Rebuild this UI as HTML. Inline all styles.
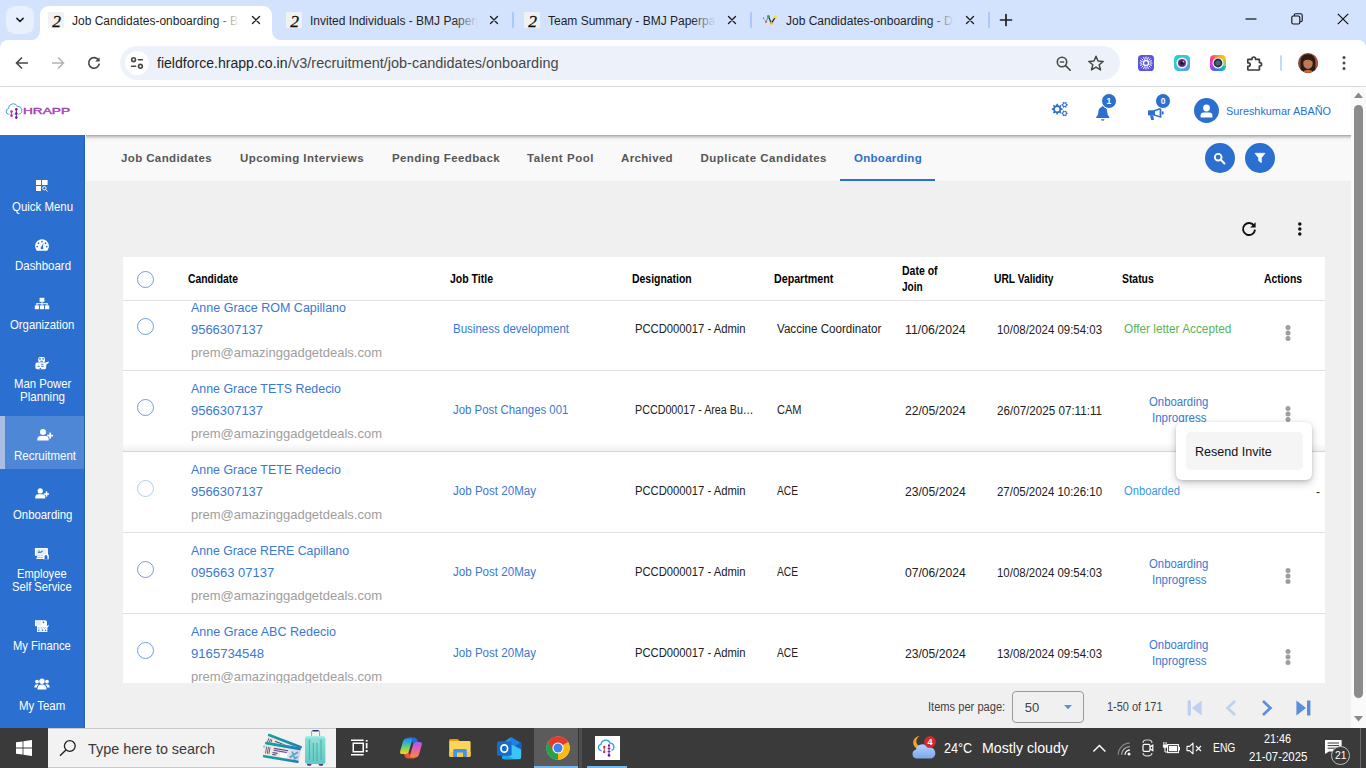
<!DOCTYPE html>
<html lang="en">
<head>
<meta charset="utf-8">
<title>Job Candidates-onboarding - BMJ Paperpack</title>
<style>
*{box-sizing:border-box;margin:0;padding:0}
html,body{width:1366px;height:768px;overflow:hidden;background:#fff;font-family:"Liberation Sans",sans-serif;color:#000}
#root{position:relative;width:1366px;height:768px;overflow:hidden}
.a{position:absolute;display:block}
.t{position:absolute;display:block;white-space:pre}
</style>
</head>
<body>
<div id="root">
<!-- chrome tab strip -->
<div class="a" style="left:0px;top:0px;width:1366px;height:50px;background:#d3e3fd;"></div>
<div class="a" style="left:0px;top:40px;width:1366px;height:46px;background:#fff;border-radius:8px 8px 0 0;"></div>
<div class="a" style="left:0px;top:86px;width:1366px;height:1px;background:#dcdfe3;"></div>
<div class="a" style="left:6px;top:6px;width:28px;height:28px;background:#e8f0fe;border-radius:9px;"></div>
<svg class="a" style="left:14px;top:15px;" width="12" height="10" viewBox="0 0 12 10"><path d="M2.9 3.4 L6 6.5 L9.1 3.4" fill="none" stroke="#1f1f1f" stroke-width="1.6" stroke-linecap="round" stroke-linejoin="round"/></svg>
<svg class="a" style="left:28px;top:6px;" width="256" height="35" viewBox="0 0 256 35"><path d="M0 35 C7 35 12 31 12 24 V9 C12 4 16 0 21 0 H235 C240 0 244 4 244 9 V24 C244 31 249 35 256 35 Z" fill="#fff"/></svg>
<div class="a" style="left:48px;top:12px;width:16px;height:16px;background:#f1f1f1;"></div>
<span class="t" style="left:52.23px;top:8.60px;font-size:17.5px;line-height:24px;color:#0a0a0a;font-style:italic;font-family:'Liberation Serif',serif;-webkit-text-stroke:0.3px #0a0a0a;">2</span>
<div class="a" style="left:72px;top:10px;width:168px;height:20px;overflow:hidden">
<span class="t" style="left:0;top:2px;font-size:12px;line-height:18px;color:#1f1f1f;letter-spacing:0px">Job Candidates-onboarding - BMJ Paperpack</span>
<div class="a" style="right:0;top:0;width:24px;height:20px;background:linear-gradient(to right,rgba(255,255,255,0),rgba(255,255,255,1))"></div>
</div>
<svg class="a" style="left:251px;top:15px;" width="10" height="10" viewBox="0 0 10 10"><path d="M1.5 1.5 L8.5 8.5 M8.5 1.5 L1.5 8.5" fill="none" stroke="#1f1f1f" stroke-width="1.35" stroke-linecap="round"/></svg>
<div class="a" style="left:286px;top:12px;width:16px;height:16px;background:#f1f1f1;"></div>
<span class="t" style="left:290.23px;top:8.60px;font-size:17.5px;line-height:24px;color:#0a0a0a;font-style:italic;font-family:'Liberation Serif',serif;-webkit-text-stroke:0.3px #0a0a0a;">2</span>
<div class="a" style="left:310px;top:10px;width:168px;height:20px;overflow:hidden">
<span class="t" style="left:0;top:2px;font-size:12px;line-height:18px;color:#1f1f1f;letter-spacing:0px">Invited Individuals - BMJ Paperpack</span>
<div class="a" style="right:0;top:0;width:24px;height:20px;background:linear-gradient(to right,rgba(211,227,253,0),rgba(211,227,253,1))"></div>
</div>
<svg class="a" style="left:489px;top:15px;" width="10" height="10" viewBox="0 0 10 10"><path d="M1.5 1.5 L8.5 8.5 M8.5 1.5 L1.5 8.5" fill="none" stroke="#1f1f1f" stroke-width="1.35" stroke-linecap="round"/></svg>
<div class="a" style="left:512px;top:12px;width:2px;height:16px;background:#a8c7fa;border-radius:1px;"></div>
<div class="a" style="left:524px;top:12px;width:16px;height:16px;background:#f1f1f1;"></div>
<span class="t" style="left:528.23px;top:8.60px;font-size:17.5px;line-height:24px;color:#0a0a0a;font-style:italic;font-family:'Liberation Serif',serif;-webkit-text-stroke:0.3px #0a0a0a;">2</span>
<div class="a" style="left:548px;top:10px;width:168px;height:20px;overflow:hidden">
<span class="t" style="left:0;top:2px;font-size:12px;line-height:18px;color:#1f1f1f;letter-spacing:0px">Team Summary - BMJ Paperpack</span>
<div class="a" style="right:0;top:0;width:24px;height:20px;background:linear-gradient(to right,rgba(211,227,253,0),rgba(211,227,253,1))"></div>
</div>
<svg class="a" style="left:727px;top:15px;" width="10" height="10" viewBox="0 0 10 10"><path d="M1.5 1.5 L8.5 8.5 M8.5 1.5 L1.5 8.5" fill="none" stroke="#1f1f1f" stroke-width="1.35" stroke-linecap="round"/></svg>
<div class="a" style="left:750px;top:12px;width:2px;height:16px;background:#a8c7fa;border-radius:1px;"></div>
<svg class="a" style="left:761px;top:11px;" width="18" height="18" viewBox="0 0 18 18"><path d="M2.5 7 L5 11" stroke="#8a94a6" stroke-width="0.6"/><path d="M5 11 L7.4 5.3" stroke="#7a7f88" stroke-width="0.9"/><path d="M7.4 5.3 L10.3 12.3" stroke="#333" stroke-width="1.2"/><path d="M10.3 12.3 L14.5 6" stroke="#222" stroke-width="1.3"/><circle cx="2.5" cy="7" r="0.7" fill="#3b82e6"/><circle cx="5" cy="11" r="1" fill="#ea4a3f"/><circle cx="7.4" cy="5.3" r="1.4" fill="#34a853"/><circle cx="10.3" cy="12.3" r="1.4" fill="#fbb514"/><circle cx="14.5" cy="6" r="1.6" fill="#fde11a"/></svg>
<div class="a" style="left:786px;top:10px;width:168px;height:20px;overflow:hidden">
<span class="t" style="left:0;top:2px;font-size:12px;line-height:18px;color:#1f1f1f;letter-spacing:0px">Job Candidates-onboarding - Dev</span>
<div class="a" style="right:0;top:0;width:24px;height:20px;background:linear-gradient(to right,rgba(211,227,253,0),rgba(211,227,253,1))"></div>
</div>
<svg class="a" style="left:965px;top:15px;" width="10" height="10" viewBox="0 0 10 10"><path d="M1.5 1.5 L8.5 8.5 M8.5 1.5 L1.5 8.5" fill="none" stroke="#1f1f1f" stroke-width="1.35" stroke-linecap="round"/></svg>
<div class="a" style="left:988px;top:12px;width:2px;height:16px;background:#a8c7fa;border-radius:1px;"></div>
<svg class="a" style="left:999px;top:13px;" width="14" height="14" viewBox="0 0 14 14"><path d="M7 1.5 V12.5 M1.5 7 H12.5" stroke="#1f1f1f" stroke-width="1.7" stroke-linecap="round"/></svg>
<svg class="a" style="left:1245px;top:14px;" width="12" height="10" viewBox="0 0 12 10"><path d="M0.5 5 H11.5" stroke="#111" stroke-width="1.2"/></svg>
<svg class="a" style="left:1291px;top:13px;" width="12" height="12" viewBox="0 0 12 12"><rect x="0.8" y="3" width="8" height="8" rx="1.5" fill="none" stroke="#111" stroke-width="1.1"/><path d="M3.2 3 V2.3 Q3.2 0.8 4.7 0.8 H9.7 Q11.2 0.8 11.2 2.3 V7.3 Q11.2 8.8 9.7 8.8 H9" fill="none" stroke="#111" stroke-width="1.1"/></svg>
<svg class="a" style="left:1337px;top:13px;" width="12" height="12" viewBox="0 0 12 12"><path d="M0.8 0.8 L11.2 11.2 M11.2 0.8 L0.8 11.2" stroke="#111" stroke-width="1.2"/></svg>
<!-- chrome toolbar -->
<svg class="a" style="left:14px;top:55px;" width="16" height="16" viewBox="0 0 16 16"><path d="M14 8 H3 M8 2.5 L2.5 8 L8 13.5" fill="none" stroke="#474747" stroke-width="1.6" stroke-linejoin="miter"/></svg>
<svg class="a" style="left:50px;top:55px;" width="16" height="16" viewBox="0 0 16 16"><path d="M2 8 H13 M8 2.5 L13.5 8 L8 13.5" fill="none" stroke="#b4b4b4" stroke-width="1.6"/></svg>
<svg class="a" style="left:86px;top:55px;" width="16" height="16" viewBox="0 0 16 16"><path d="M12.6 5.2 A5.3 5.3 0 1 0 13.3 8.6" fill="none" stroke="#474747" stroke-width="1.6"/><path d="M13.6 2.2 V6.6 H9.2 Z" fill="#474747"/></svg>
<div class="a" style="left:120px;top:46px;width:1000px;height:34px;background:#edf2fa;border-radius:17px;"></div>
<div class="a" style="left:125px;top:51px;width:24px;height:24px;background:#fff;border-radius:12px;"></div>
<svg class="a" style="left:129px;top:55px;" width="16" height="16" viewBox="0 0 16 16"><g fill="none" stroke="#474747" stroke-width="1.6" stroke-linecap="round"><circle cx="4.6" cy="4.7" r="1.9"/><path d="M9.4 4.7 H13.4"/><circle cx="11.4" cy="11.3" r="1.9"/><path d="M2.6 11.3 H6.6"/></g></svg>
<span class="t" style="left:157.00px;top:53.00px;font-size:14px;line-height:20px;color:#1f1f1f;transform:scaleX(1.0041);transform-origin:0 50%;">fieldforce.hrapp.co.in</span>
<span class="t" style="left:287.50px;top:53.00px;font-size:14px;line-height:20px;color:#474747;transform:scaleX(1.0344);transform-origin:0 50%;">/v3/recruitment/job-candidates/onboarding</span>
<svg class="a" style="left:1055px;top:55px;" width="18" height="18" viewBox="0 0 18 18"><g fill="none" stroke="#474747" stroke-width="1.6"><circle cx="7" cy="7" r="4.7"/><path d="M10.6 10.6 L15.2 15.2" stroke-linecap="round"/><path d="M4.8 7 H9.2" stroke-width="1.4"/></g></svg>
<svg class="a" style="left:1087px;top:54px;" width="18" height="18" viewBox="0 0 18 18"><path d="M9 2.2 L11 7 L16.2 7.4 L12.2 10.8 L13.5 15.9 L9 13.1 L4.5 15.9 L5.8 10.8 L1.8 7.4 L7 7 Z" fill="none" stroke="#474747" stroke-width="1.5" stroke-linejoin="round"/></svg>
<svg class="a" style="left:1138px;top:55px;" width="16" height="16" viewBox="0 0 16 16"><rect width="16" height="16" rx="3.6" fill="#5a55e6"/><circle cx="8" cy="8" r="2.5" fill="none" stroke="#fff" stroke-width="1.3"/><g stroke="#fff" stroke-width="1" stroke-linecap="round"><path d="M8 2V3.9M8 12.1V14M2 8H3.9M12.1 8H14M3.75 3.75L5.1 5.1M10.9 10.9L12.25 12.25M12.25 3.75L10.9 5.1M5.1 10.9L3.75 12.25M5.7 2.45L6.4 4.2M9.6 11.8L10.3 13.55M10.3 2.45L9.6 4.2M6.4 11.8L5.7 13.55M2.45 5.7L4.2 6.4M11.8 9.6L13.55 10.3M2.45 10.3L4.2 9.6M11.8 6.4L13.55 5.7"/></g></svg>
<svg class="a" style="left:1174px;top:55px;" width="16" height="16" viewBox="0 0 16 16"><defs><linearGradient id="g2" x1="0" y1="0" x2="1" y2="1"><stop offset="0" stop-color="#1fd6c1"/><stop offset="0.55" stop-color="#3fc0dd"/><stop offset="1" stop-color="#6d86f2"/></linearGradient></defs><rect width="16" height="16" rx="4.2" fill="url(#g2)"/><circle cx="8" cy="8" r="5.6" fill="#f6f3fb"/><circle cx="8" cy="8" r="4" fill="#6b3d8e"/><circle cx="8" cy="8" r="2.7" fill="#3b2052"/><circle cx="8" cy="8" r="1.2" fill="#1b0f28"/><circle cx="9.4" cy="6.6" r="0.9" fill="#c9b3e8"/></svg>
<svg class="a" style="left:1210px;top:55px;" width="16" height="16" viewBox="0 0 16 16"><defs><linearGradient id="g3a" x1="0" y1="0" x2="1" y2="0"><stop offset="0" stop-color="#ff2a8e"/><stop offset="0.5" stop-color="#ff9a1f"/><stop offset="1" stop-color="#f4d21f"/></linearGradient><linearGradient id="g3b" x1="0" y1="0" x2="1" y2="0"><stop offset="0" stop-color="#a23cf0"/><stop offset="0.5" stop-color="#2f7df0"/><stop offset="1" stop-color="#1fcf9a"/></linearGradient><clipPath id="g3c"><rect width="16" height="16" rx="4.2"/></clipPath></defs><g clip-path="url(#g3c)"><rect width="16" height="8" fill="url(#g3a)"/><rect y="8" width="16" height="8" fill="url(#g3b)"/><rect y="5" width="3" height="6" fill="#e338c8"/><rect x="13" y="5" width="3" height="6" fill="#8fd93a"/></g><circle cx="8" cy="8" r="5.5" fill="#fff"/><circle cx="8" cy="8" r="4.4" fill="#2a3340"/><circle cx="8" cy="8" r="2.6" fill="#48627c"/></svg>
<svg class="a" style="left:1245px;top:54px;" width="18" height="18" viewBox="0 0 18 18"><path d="M3.2 5.4 H7 V4.8 A1.8 1.8 0 0 1 10.6 4.8 V5.4 H14 Q14.4 5.4 14.4 5.8 V8.6 H14.8 A1.8 1.8 0 0 1 14.8 12.2 H14.4 V15.6 Q14.4 16 14 16 H3.2 Q2.8 16 2.8 15.6 V12.4 H3.4 A1.8 1.8 0 0 0 3.4 8.8 H2.8 V5.8 Q2.8 5.4 3.2 5.4 Z" fill="none" stroke="#3c3c3c" stroke-width="1.7" stroke-linejoin="round"/></svg>
<div class="a" style="left:1280px;top:55px;width:2px;height:16px;background:#c7d9f7;border-radius:1px;"></div>
<svg class="a" style="left:1298px;top:53px;" width="20" height="20" viewBox="0 0 20 20"><defs><clipPath id="av"><circle cx="10" cy="10" r="10"/></clipPath></defs><g clip-path="url(#av)"><rect width="20" height="20" fill="#8a4a2c"/><rect x="15" width="5" height="20" fill="#b5523c"/><path d="M2.6 20 V9 Q2.6 1.2 10 1.2 Q17.4 1.2 17.4 9 V20 Z" fill="#2b1a15"/><ellipse cx="10" cy="10.4" rx="4.7" ry="5.6" fill="#b97a58"/><path d="M5.6 8.2 Q7 4.4 10 4.8 Q13.4 4.6 14.4 8.4 Q12 6.4 10 6.8 Q7.6 6.6 5.6 8.2 Z" fill="#2b1a15"/><path d="M3 20 Q10 13.6 17 20 Z" fill="#d7632e"/></g></svg>
<svg class="a" style="left:1341px;top:55px;" width="6" height="16" viewBox="0 0 6 16"><circle cx="3" cy="2.6" r="1.5" fill="#474747"/><circle cx="3" cy="8" r="1.5" fill="#474747"/><circle cx="3" cy="13.4" r="1.5" fill="#474747"/></svg>
<!-- page background / tabs bar -->
<div class="a" style="left:85px;top:135px;width:1266px;height:593px;background:#f0f0f0;"></div>
<div class="a" style="left:85px;top:135px;width:1266px;height:46px;background:#f9f9f9;"></div>
<div class="a" style="left:85px;top:181px;width:1266px;height:1px;background:#ededed;"></div>
<div class="a" style="left:1351px;top:87px;width:15px;height:641px;background:#fafafa;z-index:9;"></div>
<svg class="a" style="left:1351px;top:87px;z-index:10;" width="15" height="17" viewBox="0 0 15 17"><path d="M7.5 5.5 L12 11 H3 Z" fill="#8a8a8a"/></svg>
<svg class="a" style="left:1351px;top:710px;z-index:10;" width="15" height="17" viewBox="0 0 15 17"><path d="M7.5 11.5 L12 6 H3 Z" fill="#8a8a8a"/></svg>
<div class="a" style="left:1354px;top:105px;width:9px;height:592.5px;background:#8b8b8b;border-radius:4.5px;z-index:10;"></div>
<!-- router tabs -->
<span class="t" style="left:121.00px;top:149.70px;font-size:11.5px;line-height:16px;color:#565656;font-weight:700;letter-spacing:0.383px;">Job Candidates</span>
<span class="t" style="left:240.00px;top:149.70px;font-size:11.5px;line-height:16px;color:#565656;font-weight:700;letter-spacing:0.438px;">Upcoming Interviews</span>
<span class="t" style="left:392.00px;top:149.70px;font-size:11.5px;line-height:16px;color:#565656;font-weight:700;letter-spacing:0.399px;">Pending Feedback</span>
<span class="t" style="left:527.00px;top:149.70px;font-size:11.5px;line-height:16px;color:#565656;font-weight:700;letter-spacing:0.534px;">Talent Pool</span>
<span class="t" style="left:621.00px;top:149.70px;font-size:11.5px;line-height:16px;color:#565656;font-weight:700;letter-spacing:0.348px;">Archived</span>
<span class="t" style="left:700.50px;top:149.70px;font-size:11.5px;line-height:16px;color:#565656;font-weight:700;letter-spacing:0.477px;">Duplicate Candidates</span>
<span class="t" style="left:854.00px;top:149.70px;font-size:11.5px;line-height:16px;color:#2b6fd0;font-weight:700;letter-spacing:0.283px;">Onboarding</span>
<div class="a" style="left:840px;top:179px;width:95px;height:2px;background:#2b6fd0;"></div>
<div class="a" style="left:1205px;top:143px;width:30px;height:30px;background:#2b6fd0;border-radius:15px;"></div>
<svg class="a" style="left:1213.4px;top:152.2px;" width="13" height="13" viewBox="0 0 14 14"><circle cx="5.6" cy="5.6" r="3.6" fill="none" stroke="#fff" stroke-width="2"/><path d="M8.4 8.4 L12.3 12.3" stroke="#fff" stroke-width="2.2" stroke-linecap="round"/></svg>
<div class="a" style="left:1244.5px;top:143px;width:30px;height:30px;background:#2b6fd0;border-radius:15px;"></div>
<svg class="a" style="left:1253.5px;top:152.4px;" width="12" height="12" viewBox="0 0 14 14"><path d="M1.2 1.5 H12.8 L8.6 6.8 V12.4 L5.4 10.2 V6.8 Z" fill="#fff" stroke="#fff" stroke-width="0.8" stroke-linejoin="round"/></svg>
<svg class="a" style="left:1240px;top:220px;" width="18" height="18" viewBox="0 0 18 18"><path d="M14.2 6 A6 6 0 1 0 15 9.6" fill="none" stroke="#111" stroke-width="1.9"/><path d="M15.6 2.2 V7.6 H10.2 Z" fill="#111"/></svg>
<svg class="a" style="left:1296px;top:221px;" width="8" height="16" viewBox="0 0 8 16"><circle cx="3.8" cy="3" r="1.75" fill="#111"/><circle cx="3.8" cy="8" r="1.75" fill="#111"/><circle cx="3.8" cy="13" r="1.75" fill="#111"/></svg>
<!-- sidebar -->
<div class="a" style="left:0;top:0;width:86px;height:728px;z-index:6">
<div class="a" style="left:0px;top:135px;width:84px;height:593px;background:#2b6fd0;"></div>
<div class="a" style="left:84px;top:135px;width:1px;height:593px;background:#1f5eb9;"></div>
<div class="a" style="left:85px;top:135px;width:1px;height:593px;background:#fcfaf6;"></div>
<div class="a" style="left:0px;top:416px;width:84px;height:53px;background:#4d87d6;"></div>
<div class="a" style="left:0px;top:416px;width:5px;height:53px;background:#a9bfe1;"></div>
<span class="t" style="left:11.50px;top:197.00px;font-size:13px;line-height:19px;color:#fff;transform:scaleX(0.8793);transform-origin:0 50%;">Quick Menu</span>
<span class="t" style="left:14.50px;top:256.00px;font-size:13px;line-height:19px;color:#fff;transform:scaleX(0.8804);transform-origin:0 50%;">Dashboard</span>
<span class="t" style="left:9.80px;top:315.00px;font-size:13px;line-height:19px;color:#fff;transform:scaleX(0.8736);transform-origin:0 50%;">Organization</span>
<span class="t" style="left:13.60px;top:374.00px;font-size:13px;line-height:19px;color:#fff;transform:scaleX(0.8730);transform-origin:0 50%;">Man Power</span>
<span class="t" style="left:19.80px;top:387.00px;font-size:13px;line-height:19px;color:#fff;transform:scaleX(0.8892);transform-origin:0 50%;">Planning</span>
<span class="t" style="left:13.50px;top:446.00px;font-size:13px;line-height:19px;color:#fff;transform:scaleX(0.8847);transform-origin:0 50%;">Recruitment</span>
<span class="t" style="left:12.90px;top:505.00px;font-size:13px;line-height:19px;color:#fff;transform:scaleX(0.8741);transform-origin:0 50%;">Onboarding</span>
<span class="t" style="left:17.40px;top:564.00px;font-size:13px;line-height:19px;color:#fff;transform:scaleX(0.8579);transform-origin:0 50%;">Employee</span>
<span class="t" style="left:12.00px;top:577.00px;font-size:13px;line-height:19px;color:#fff;transform:scaleX(0.8591);transform-origin:0 50%;">Self Service</span>
<span class="t" style="left:13.10px;top:636.00px;font-size:13px;line-height:19px;color:#fff;transform:scaleX(0.8601);transform-origin:0 50%;">My Finance</span>
<span class="t" style="left:18.85px;top:696.00px;font-size:13px;line-height:19px;color:#fff;transform:scaleX(0.8819);transform-origin:0 50%;">My Team</span>
<svg class="a" style="left:35px;top:179px;" width="14" height="13" viewBox="0 0 14 13"><g fill="#fff"><rect x="1" y="1" width="5" height="5"/><rect x="7" y="1" width="5.6" height="5"/><rect x="1" y="7" width="5" height="5"/></g><circle cx="9.4" cy="9.2" r="1.7" fill="none" stroke="#fff" stroke-width="1"/><path d="M10.6 10.5 L12.6 12.5" stroke="#fff" stroke-width="1"/></svg>
<svg class="a" style="left:34px;top:239px;" width="16" height="12" viewBox="0 0 16 12"><path d="M2.6 11.4 A6.9 6.9 0 1 1 13.4 11.4 Q13.2 11.8 12.6 11.8 H3.4 Q2.8 11.8 2.6 11.4 Z" fill="#fff"/><g fill="#2b6fd0"><circle cx="8" cy="2.6" r="0.85"/><circle cx="4.5" cy="4.2" r="0.85"/><circle cx="11.5" cy="4.2" r="0.85"/><circle cx="3.2" cy="7.6" r="0.85"/><circle cx="12.8" cy="7.6" r="0.85"/><path d="M7.1 8.6 L9.5 3.8 L8.9 9 Z"/><circle cx="8" cy="8.9" r="1.35"/></g></svg>
<svg class="a" style="left:34px;top:297px;" width="16" height="13" viewBox="0 0 16 13"><g fill="#fff"><rect x="5.6" y="0.8" width="4.8" height="4"/><rect x="0.8" y="8.4" width="4.2" height="3.8"/><rect x="5.9" y="8.4" width="4.2" height="3.8"/><rect x="11" y="8.4" width="4.2" height="3.8"/><rect x="7.5" y="4.6" width="1" height="4"/><rect x="2.4" y="6.2" width="11.2" height="1"/><rect x="2.4" y="6.2" width="1" height="2.4"/><rect x="12.6" y="6.2" width="1" height="2.4"/></g></svg>
<svg class="a" style="left:34px;top:356px;" width="16" height="14" viewBox="0 0 16 14"><g fill="#fff"><rect x="4.2" y="0.9" width="6.8" height="5.6" rx="2"/><path d="M1.4 8.2 Q1.4 6.6 3 6.6 H11.6 L14.6 5.4 L15 6.6 L12.4 8.6 L12 12 Q11.8 13.2 10.6 13.2 H3 Q1.4 13.2 1.4 11.6 Z"/></g><g fill="#2b6fd0"><circle cx="6" cy="2.9" r="0.8"/><circle cx="9.1" cy="2.9" r="0.8"/><rect x="6.2" y="4.8" width="2.8" height="1" rx="0.5"/><rect x="6.8" y="7.8" width="2.6" height="0.9"/><rect x="3.6" y="9.8" width="2" height="1"/><rect x="7.2" y="9.8" width="2.4" height="1"/><rect x="5.6" y="12" width="1.4" height="1.2"/></g></svg>
<svg class="a" style="left:37px;top:429px;" width="16" height="12" viewBox="0 0 16 12"><g fill="#fff"><circle cx="6" cy="3.1" r="3"/><path d="M0.3 11.6 V10.4 Q0.3 6.9 3.6 6.9 H8.4 Q11.7 6.9 11.7 10.4 V11.6 Z"/><rect x="12.3" y="3.6" width="1.7" height="6"/><rect x="10.15" y="5.75" width="6" height="1.7"/></g></svg>
<svg class="a" style="left:35px;top:488px;" width="14" height="11" viewBox="0 0 16 12"><g fill="#fff"><circle cx="6" cy="3.1" r="3"/><path d="M0.3 11.6 V10.4 Q0.3 6.9 3.6 6.9 H8.4 Q11.7 6.9 11.7 10.4 V11.6 Z"/><rect x="12.3" y="3.6" width="1.7" height="6"/><rect x="10.15" y="5.75" width="6" height="1.7"/></g></svg>
<svg class="a" style="left:34px;top:547px;" width="16" height="13" viewBox="0 0 16 13"><rect x="0.9" y="0.9" width="13" height="7.8" rx="0.6" fill="#fff"/><rect x="2.2" y="2" width="10.4" height="5.6" fill="#e3ecfa"/><path d="M4 5.2 H7 L8.6 3.8" fill="none" stroke="#2b6fd0" stroke-width="1.1"/><path d="M5 3.2 V6" stroke="#2b6fd0" stroke-width="0.7"/><rect x="3" y="9" width="7" height="1.2" fill="#fff"/><rect x="2.4" y="10.4" width="8" height="1.6" rx="0.5" fill="#fff"/><path d="M9.2 12.2 V9.6 Q9.2 6.6 12 6.6 Q14.8 6.6 14.8 9.6 V12.2 Z" fill="#fff"/><path d="M10.6 12.2 V9.6 Q10.6 8 12 8 Q13.4 8 13.4 9.6 V12.2 Z" fill="#2b6fd0"/></svg>
<svg class="a" style="left:34px;top:619px;" width="15" height="14" viewBox="0 0 15 14"><g fill="#fff"><rect x="1" y="1.2" width="7" height="6" opacity=".93"/><path d="M7.6 1.2 H11 Q13 1.2 13 3.6 V8 H7.6 Z"/><rect x="3" y="7" width="10.4" height="6" opacity=".95"/><path d="M12.6 7.4 L14.4 6 L15 6.8 L13.4 8.6 Z"/></g><g fill="#2b6fd0"><rect x="8.6" y="2.4" width="1.6" height="1.8" rx="0.6"/><circle cx="4.8" cy="11.2" r="0.7"/><circle cx="8.6" cy="11.2" r="0.7"/><circle cx="11.6" cy="11.2" r="0.7"/></g><path d="M4.6 8 L5.2 10.4 M7 8 L8.4 10.6 M9.4 8 L10.4 9.6 L11.6 8" fill="none" stroke="#7fb0ee" stroke-width="0.7"/><path d="M2.2 3.4 H6.4 M2.2 5 H6.4" stroke="#cfe0f8" stroke-width="0.7"/></svg>
<svg class="a" style="left:34px;top:678px;" width="16" height="12" viewBox="0 0 16 12"><g fill="#fff"><circle cx="8" cy="3.2" r="2.7"/><path d="M3.4 11.6 Q3.4 6.6 8 6.6 Q12.6 6.6 12.6 11.6 Z"/><circle cx="3" cy="3.6" r="1.9"/><circle cx="13" cy="3.6" r="1.9"/><path d="M0.3 9.6 Q0.3 6.2 3.4 6.2 Q4.2 6.2 4.6 6.5 Q2.8 7.8 2.8 9.6 Z"/><path d="M15.7 9.6 Q15.7 6.2 12.6 6.2 Q11.8 6.2 11.4 6.5 Q13.2 7.8 13.2 9.6 Z"/></g></svg>
</div>
<!-- app header -->
<div class="a" style="left:0px;top:87px;width:1366px;height:48px;background:#fff;box-shadow:0 2px 4px -1px rgba(0,0,0,.5);z-index:5;"></div>
<svg class="a" style="left:5px;top:101px;z-index:6;" width="19" height="20" viewBox="0 0 19 20"><path d="M3.7 13.2 A2.9 2.9 0 0 1 3.5 7.5 A4.6 4.6 0 0 1 12.3 5.6 A3.7 3.7 0 0 1 13.6 13.2" fill="none" stroke="#3aa0f2" stroke-width="1"/><path d="M3.7 13.2 H13.6" stroke="#9dd0f8" stroke-width="0.9"/><path d="M6.5 10.6 V14.6" stroke="#e91e63" stroke-width="0.9"/><circle cx="6.5" cy="10.5" r="1.25" fill="#e91e63"/><circle cx="6.5" cy="14.7" r="1.25" fill="#e91e63"/><path d="M11.3 8.2 V16.6" stroke="#6a1b9a" stroke-width="1"/><circle cx="11.3" cy="8.2" r="1.25" fill="#6a1b9a"/><circle cx="11.3" cy="12.4" r="1.25" fill="#6a1b9a"/><circle cx="11.3" cy="16.6" r="1.3" fill="#6a1b9a"/></svg>
<span class="t" style="left:23.30px;top:104.20px;font-size:9.3px;line-height:14px;color:#a23bb4;transform:scaleX(1.4673);transform-origin:0 50%;z-index:6;-webkit-text-stroke:0.4px #a23bb4;">HRAPP</span>
<svg class="a" style="left:1051px;top:100px;z-index:6;" width="18" height="18" viewBox="0 0 18 18"><path d="M11.57 8.61 L11.57 9.79 L10.04 10.31 L9.70 11.13 L10.41 12.58 L9.58 13.41 L8.13 12.70 L7.31 13.04 L6.79 14.57 L5.61 14.57 L5.09 13.04 L4.27 12.70 L2.82 13.41 L1.99 12.58 L2.70 11.13 L2.36 10.31 L0.83 9.79 L0.83 8.61 L2.36 8.09 L2.70 7.27 L1.99 5.82 L2.82 4.99 L4.27 5.70 L5.09 5.36 L5.61 3.83 L6.79 3.83 L7.31 5.36 L8.13 5.70 L9.58 4.99 L10.41 5.82 L9.70 7.27 L10.04 8.09 Z M3.93 9.20 a2.27 2.27 0 1 0 4.54 0 a2.27 2.27 0 1 0 -4.54 0 Z" fill="#2b6fd0" fill-rule="evenodd"/><path d="M16.67 4.35 L16.67 5.25 L15.73 5.64 L15.40 6.22 L15.53 7.23 L14.74 7.68 L13.94 7.07 L13.26 7.07 L12.46 7.68 L11.67 7.23 L11.80 6.22 L11.47 5.64 L10.53 5.25 L10.53 4.35 L11.47 3.96 L11.80 3.38 L11.67 2.37 L12.46 1.92 L13.26 2.53 L13.94 2.53 L14.74 1.92 L15.53 2.37 L15.40 3.38 L15.73 3.96 Z M12.30 4.80 a1.30 1.30 0 1 0 2.60 0 a1.30 1.30 0 1 0 -2.60 0 Z" fill="#2b6fd0" fill-rule="evenodd"/><path d="M16.67 12.95 L16.67 13.85 L15.73 14.24 L15.40 14.82 L15.53 15.83 L14.74 16.28 L13.94 15.67 L13.26 15.67 L12.46 16.28 L11.67 15.83 L11.80 14.82 L11.47 14.24 L10.53 13.85 L10.53 12.95 L11.47 12.56 L11.80 11.98 L11.67 10.97 L12.46 10.52 L13.26 11.13 L13.94 11.13 L14.74 10.52 L15.53 10.97 L15.40 11.98 L15.73 12.56 Z M12.30 13.40 a1.30 1.30 0 1 0 2.60 0 a1.30 1.30 0 1 0 -2.60 0 Z" fill="#2b6fd0" fill-rule="evenodd"/></svg>
<svg class="a" style="left:1095px;top:105px;z-index:6;" width="16" height="17" viewBox="0 0 16 17"><path d="M7.8 1 Q8.9 1 8.9 2.1 Q12.2 3 12.2 7 Q12.2 10.2 14.4 12 V13 H1.2 V12 Q3.4 10.2 3.4 7 Q3.4 3 6.7 2.1 Q6.7 1 7.8 1 Z" fill="#2b6fd0"/><path d="M6 14.2 H9.6 Q9.2 15.8 7.8 15.8 Q6.4 15.8 6 14.2 Z" fill="#2b6fd0"/></svg>
<svg class="a" style="left:1147px;top:107px;z-index:6;" width="18" height="14" viewBox="0 0 18 14"><path d="M1 4.2 Q1 3.2 2 3.2 H6.4 L14.4 0.6 V11 L6.4 8.6 H2 Q1 8.6 1 7.6 Z M8 4.2 V7.6 L12.6 9 V2.8 Z" fill="#2b6fd0" fill-rule="evenodd"/><path d="M3 8.6 H6.2 L7 13 H4.2 Z" fill="#2b6fd0"/><rect x="14.8" y="4.2" width="1.8" height="3.4" rx="0.8" fill="#2b6fd0"/></svg>
<div class="a" style="left:1100.5px;top:92.7px;width:16.6px;height:16.6px;border-radius:50%;background:#2b6fd0;border:1.2px solid #fff;z-index:7"></div>
<span class="t" style="left:1106.43px;top:94.10px;font-size:8.5px;line-height:14px;color:#fff;font-weight:700;z-index:8;">1</span>
<div class="a" style="left:1154.9px;top:92.7px;width:16.6px;height:16.6px;border-radius:50%;background:#2b6fd0;border:1.2px solid #fff;z-index:7"></div>
<span class="t" style="left:1160.83px;top:94.10px;font-size:8.5px;line-height:14px;color:#fff;font-weight:700;z-index:8;">0</span>
<div class="a" style="left:1194px;top:98.3px;width:25px;height:25px;background:#2b6fd0;border-radius:50%;z-index:6;"></div>
<svg class="a" style="left:1199px;top:103px;z-index:7;" width="15" height="16" viewBox="0 0 15 16"><circle cx="7.5" cy="5" r="3.4" fill="#fff"/><path d="M1.6 14.4 V12.6 Q1.6 9.4 4.8 9.4 H10.2 Q13.4 9.4 13.4 12.6 V14.4 Z" fill="#fff"/></svg>
<span class="t" style="left:1226.00px;top:103.00px;font-size:11.5px;line-height:16px;color:#2b6fd0;transform:scaleX(0.9441);transform-origin:0 50%;z-index:6;">Sureshkumar ABAÑO</span>
<!-- table card -->
<div class="a" style="left:123px;top:257px;width:1202px;height:426px;background:#fff;"></div>
<div class="a" style="left:123px;top:301px;width:1202px;height:382px;overflow:hidden">
<div class="a" style="left:0;top:69px;width:1202px;height:1px;background:#e0e0e0"></div>
<div class="a" style="left:14.099999999999994px;top:16.899999999999977px;width:17px;height:17px;border-radius:50%;border:1.6px solid #6f9ce2"></div>
<span class="t" style="left:68.00px;top:-3.00px;font-size:13px;line-height:19px;color:#3978d4;transform:scaleX(0.9619);transform-origin:0 50%;">Anne Grace ROM Capillano</span>
<span class="t" style="left:68.00px;top:19.00px;font-size:13px;line-height:19px;color:#3978d4;transform:scaleX(0.9957);transform-origin:0 50%;">9566307137</span>
<span class="t" style="left:68.00px;top:41.60px;font-size:13px;line-height:19px;color:#9e9e9e;">prem@amazinggadgetdeals.com</span>
<span class="t" style="left:330.00px;top:19.00px;font-size:12px;line-height:18px;color:#3978d4;transform:scaleX(0.9607);transform-origin:0 50%;">Business development</span>
<span class="t" style="left:512.40px;top:19.00px;font-size:12px;line-height:18px;color:#212121;transform:scaleX(0.9368);transform-origin:0 50%;">PCCD000017 - Admin</span>
<span class="t" style="left:654.40px;top:19.00px;font-size:12px;line-height:18px;color:#212121;transform:scaleX(0.9671);transform-origin:0 50%;">Vaccine Coordinator</span>
<span class="t" style="left:782.00px;top:20.00px;font-size:12px;line-height:18px;color:#212121;transform:scaleX(1.0258);transform-origin:0 50%;">11/06/2024</span>
<span class="t" style="left:873.70px;top:20.00px;font-size:12px;line-height:18px;color:#212121;transform:scaleX(0.9536);transform-origin:0 50%;">10/08/2024 09:54:03</span>
<span class="t" style="left:1001.40px;top:18.60px;font-size:12px;line-height:18px;color:#57b45b;transform:scaleX(0.9838);transform-origin:0 50%;">Offer letter Accepted</span>
<svg class="a" style="left:1161.6px;top:22.5px;" width="6" height="18" viewBox="0 0 6 18"><circle cx="3" cy="3.4" r="2.5" fill="#9e9e9e"/><circle cx="3" cy="9" r="2.5" fill="#9e9e9e"/><circle cx="3" cy="14.6" r="2.5" fill="#9e9e9e"/></svg>
<div class="a" style="left:0;top:142px;width:1202px;height:8px;background:linear-gradient(to bottom,rgba(30,50,70,0),rgba(30,50,70,.07))"></div>
<div class="a" style="left:0;top:150px;width:1202px;height:1px;background:#d2d7db"></div>
<div class="a" style="left:14.099999999999994px;top:97.89999999999998px;width:17px;height:17px;border-radius:50%;border:1.6px solid #6f9ce2"></div>
<span class="t" style="left:68.00px;top:78.00px;font-size:13px;line-height:19px;color:#3978d4;transform:scaleX(0.9536);transform-origin:0 50%;">Anne Grace TETS Redecio</span>
<span class="t" style="left:68.00px;top:100.00px;font-size:13px;line-height:19px;color:#3978d4;transform:scaleX(0.9957);transform-origin:0 50%;">9566307137</span>
<span class="t" style="left:68.00px;top:122.60px;font-size:13px;line-height:19px;color:#9e9e9e;">prem@amazinggadgetdeals.com</span>
<span class="t" style="left:330.00px;top:100.00px;font-size:12px;line-height:18px;color:#3978d4;transform:scaleX(0.9504);transform-origin:0 50%;">Job Post Changes 001</span>
<span class="t" style="left:512.40px;top:100.00px;font-size:12px;line-height:18px;color:#212121;transform:scaleX(0.8935);transform-origin:0 50%;">PCCD00017 - Area Bu…</span>
<span class="t" style="left:654.40px;top:100.00px;font-size:12px;line-height:18px;color:#212121;transform:scaleX(0.9186);transform-origin:0 50%;">CAM</span>
<span class="t" style="left:782.00px;top:101.00px;font-size:12px;line-height:18px;color:#212121;transform:scaleX(1.0106);transform-origin:0 50%;">22/05/2024</span>
<span class="t" style="left:873.70px;top:101.00px;font-size:12px;line-height:18px;color:#212121;transform:scaleX(0.9693);transform-origin:0 50%;">26/07/2025 07:11:11</span>
<span class="t" style="left:1026.15px;top:92.00px;font-size:12px;line-height:18px;color:#3978d4;transform:scaleX(0.9455);transform-origin:0 50%;">Onboarding</span>
<span class="t" style="left:1028.55px;top:107.70px;font-size:12px;line-height:18px;color:#3978d4;transform:scaleX(0.9611);transform-origin:0 50%;">Inprogress</span>
<svg class="a" style="left:1161.6px;top:103.5px;" width="6" height="18" viewBox="0 0 6 18"><circle cx="3" cy="3.4" r="2.5" fill="#9e9e9e"/><circle cx="3" cy="9" r="2.5" fill="#9e9e9e"/><circle cx="3" cy="14.6" r="2.5" fill="#9e9e9e"/></svg>
<div class="a" style="left:0;top:231px;width:1202px;height:1px;background:#e0e0e0"></div>
<div class="a" style="left:14.099999999999994px;top:178.89999999999998px;width:17px;height:17px;border-radius:50%;border:1.6px solid #b5caef"></div>
<span class="t" style="left:68.00px;top:159.00px;font-size:13px;line-height:19px;color:#3978d4;transform:scaleX(0.9536);transform-origin:0 50%;">Anne Grace TETE Redecio</span>
<span class="t" style="left:68.00px;top:181.00px;font-size:13px;line-height:19px;color:#3978d4;transform:scaleX(0.9957);transform-origin:0 50%;">9566307137</span>
<span class="t" style="left:68.00px;top:203.60px;font-size:13px;line-height:19px;color:#9e9e9e;">prem@amazinggadgetdeals.com</span>
<span class="t" style="left:330.00px;top:181.00px;font-size:12px;line-height:18px;color:#3978d4;transform:scaleX(0.9646);transform-origin:0 50%;">Job Post 20May</span>
<span class="t" style="left:512.40px;top:181.00px;font-size:12px;line-height:18px;color:#212121;transform:scaleX(0.9368);transform-origin:0 50%;">PCCD000017 - Admin</span>
<span class="t" style="left:654.40px;top:181.00px;font-size:12px;line-height:18px;color:#212121;transform:scaleX(0.8506);transform-origin:0 50%;">ACE</span>
<span class="t" style="left:782.00px;top:182.00px;font-size:12px;line-height:18px;color:#212121;transform:scaleX(1.0106);transform-origin:0 50%;">23/05/2024</span>
<span class="t" style="left:873.70px;top:182.00px;font-size:12px;line-height:18px;color:#212121;transform:scaleX(0.9536);transform-origin:0 50%;">27/05/2024 10:26:10</span>
<span class="t" style="left:1001.40px;top:180.60px;font-size:12px;line-height:18px;color:#3a96eb;transform:scaleX(0.9326);transform-origin:0 50%;">Onboarded</span>
<span class="t" style="left:1193.00px;top:182.00px;font-size:12px;line-height:18px;color:#212121;">-</span>
<div class="a" style="left:0;top:312px;width:1202px;height:1px;background:#e0e0e0"></div>
<div class="a" style="left:14.099999999999994px;top:259.9px;width:17px;height:17px;border-radius:50%;border:1.6px solid #6f9ce2"></div>
<span class="t" style="left:68.00px;top:240.00px;font-size:13px;line-height:19px;color:#3978d4;transform:scaleX(0.9466);transform-origin:0 50%;">Anne Grace RERE Capillano</span>
<span class="t" style="left:68.00px;top:262.00px;font-size:13px;line-height:19px;color:#3978d4;">095663 07137</span>
<span class="t" style="left:68.00px;top:284.60px;font-size:13px;line-height:19px;color:#9e9e9e;">prem@amazinggadgetdeals.com</span>
<span class="t" style="left:330.00px;top:262.00px;font-size:12px;line-height:18px;color:#3978d4;transform:scaleX(0.9646);transform-origin:0 50%;">Job Post 20May</span>
<span class="t" style="left:512.40px;top:262.00px;font-size:12px;line-height:18px;color:#212121;transform:scaleX(0.9368);transform-origin:0 50%;">PCCD000017 - Admin</span>
<span class="t" style="left:654.40px;top:262.00px;font-size:12px;line-height:18px;color:#212121;transform:scaleX(0.8506);transform-origin:0 50%;">ACE</span>
<span class="t" style="left:782.00px;top:263.00px;font-size:12px;line-height:18px;color:#212121;transform:scaleX(1.0106);transform-origin:0 50%;">07/06/2024</span>
<span class="t" style="left:873.70px;top:263.00px;font-size:12px;line-height:18px;color:#212121;transform:scaleX(0.9536);transform-origin:0 50%;">10/08/2024 09:54:03</span>
<span class="t" style="left:1026.15px;top:254.00px;font-size:12px;line-height:18px;color:#3978d4;transform:scaleX(0.9455);transform-origin:0 50%;">Onboarding</span>
<span class="t" style="left:1028.55px;top:269.70px;font-size:12px;line-height:18px;color:#3978d4;transform:scaleX(0.9611);transform-origin:0 50%;">Inprogress</span>
<svg class="a" style="left:1161.6px;top:265.5px;" width="6" height="18" viewBox="0 0 6 18"><circle cx="3" cy="3.4" r="2.5" fill="#9e9e9e"/><circle cx="3" cy="9" r="2.5" fill="#9e9e9e"/><circle cx="3" cy="14.6" r="2.5" fill="#9e9e9e"/></svg>
<div class="a" style="left:0;top:393px;width:1202px;height:1px;background:#e0e0e0"></div>
<div class="a" style="left:14.099999999999994px;top:340.9px;width:17px;height:17px;border-radius:50%;border:1.6px solid #6f9ce2"></div>
<span class="t" style="left:68.00px;top:321.00px;font-size:13px;line-height:19px;color:#3978d4;transform:scaleX(0.9647);transform-origin:0 50%;">Anne Grace ABC Redecio</span>
<span class="t" style="left:68.00px;top:343.00px;font-size:13px;line-height:19px;color:#3978d4;transform:scaleX(1.0095);transform-origin:0 50%;">9165734548</span>
<span class="t" style="left:68.00px;top:365.60px;font-size:13px;line-height:19px;color:#9e9e9e;">prem@amazinggadgetdeals.com</span>
<span class="t" style="left:330.00px;top:343.00px;font-size:12px;line-height:18px;color:#3978d4;transform:scaleX(0.9646);transform-origin:0 50%;">Job Post 20May</span>
<span class="t" style="left:512.40px;top:343.00px;font-size:12px;line-height:18px;color:#212121;transform:scaleX(0.9368);transform-origin:0 50%;">PCCD000017 - Admin</span>
<span class="t" style="left:654.40px;top:343.00px;font-size:12px;line-height:18px;color:#212121;transform:scaleX(0.8506);transform-origin:0 50%;">ACE</span>
<span class="t" style="left:782.00px;top:344.00px;font-size:12px;line-height:18px;color:#212121;transform:scaleX(1.0106);transform-origin:0 50%;">23/05/2024</span>
<span class="t" style="left:873.70px;top:344.00px;font-size:12px;line-height:18px;color:#212121;transform:scaleX(0.9536);transform-origin:0 50%;">13/08/2024 09:54:03</span>
<span class="t" style="left:1026.15px;top:335.00px;font-size:12px;line-height:18px;color:#3978d4;transform:scaleX(0.9455);transform-origin:0 50%;">Onboarding</span>
<span class="t" style="left:1028.55px;top:350.70px;font-size:12px;line-height:18px;color:#3978d4;transform:scaleX(0.9611);transform-origin:0 50%;">Inprogress</span>
<svg class="a" style="left:1161.6px;top:346.5px;" width="6" height="18" viewBox="0 0 6 18"><circle cx="3" cy="3.4" r="2.5" fill="#9e9e9e"/><circle cx="3" cy="9" r="2.5" fill="#9e9e9e"/><circle cx="3" cy="14.6" r="2.5" fill="#9e9e9e"/></svg>
</div>
<div class="a" style="left:123px;top:300px;width:1202px;height:1px;background:#e0e0e0;"></div>
<div class="a" style="left:137.1px;top:271.4px;width:17px;height:17px;border-radius:50%;border:1.6px solid #6f9ce2;background:#fff"></div>
<span class="t" style="left:187.60px;top:270.00px;font-size:12px;line-height:18px;color:#000;font-weight:700;transform:scaleX(0.8618);transform-origin:0 50%;">Candidate</span>
<span class="t" style="left:450.00px;top:270.00px;font-size:12px;line-height:18px;color:#000;font-weight:700;transform:scaleX(0.8753);transform-origin:0 50%;">Job Title</span>
<span class="t" style="left:632.00px;top:270.00px;font-size:12px;line-height:18px;color:#000;font-weight:700;transform:scaleX(0.8694);transform-origin:0 50%;">Designation</span>
<span class="t" style="left:774.40px;top:270.00px;font-size:12px;line-height:18px;color:#000;font-weight:700;transform:scaleX(0.8892);transform-origin:0 50%;">Department</span>
<span class="t" style="left:993.50px;top:270.00px;font-size:12px;line-height:18px;color:#000;font-weight:700;transform:scaleX(0.8525);transform-origin:0 50%;">URL Validity</span>
<span class="t" style="left:1121.50px;top:270.00px;font-size:12px;line-height:18px;color:#000;font-weight:700;transform:scaleX(0.8641);transform-origin:0 50%;">Status</span>
<span class="t" style="left:1263.50px;top:270.00px;font-size:12px;line-height:18px;color:#000;font-weight:700;transform:scaleX(0.8633);transform-origin:0 50%;">Actions</span>
<span class="t" style="left:902.00px;top:261.50px;font-size:12px;line-height:18px;color:#000;font-weight:700;transform:scaleX(0.8753);transform-origin:0 50%;">Date of</span>
<span class="t" style="left:902.00px;top:278.30px;font-size:12px;line-height:18px;color:#000;font-weight:700;transform:scaleX(0.8390);transform-origin:0 50%;">Join</span>
<!-- action popup menu -->
<div class="a" style="left:1176px;top:422px;width:136px;height:58px;background:#fff;border-radius:6px;box-shadow:0 3px 8px rgba(0,0,0,.22),0 1px 3px rgba(0,0,0,.12);"></div>
<div class="a" style="left:1186px;top:432px;width:117px;height:38px;background:#f5f5f5;border-radius:5px;"></div>
<span class="t" style="left:1195.40px;top:442.00px;font-size:13px;line-height:19px;color:#111;transform:scaleX(0.9660);transform-origin:0 50%;">Resend Invite</span>
<!-- paginator -->
<span class="t" style="left:928.00px;top:698.00px;font-size:12px;line-height:18px;color:#424242;transform:scaleX(0.9258);transform-origin:0 50%;">Items per page:</span>
<div class="a" style="left:1012px;top:691px;width:72px;height:32px;background:transparent;border:1px solid #9a9a9a;border-radius:4px;"></div>
<span class="t" style="left:1024.80px;top:697.50px;font-size:13px;line-height:19px;color:#424242;">50</span>
<svg class="a" style="left:1063px;top:704px;" width="10" height="6" viewBox="0 0 10 6"><path d="M1 1 H9 L5 5.2 Z" fill="#5b8fe0"/></svg>
<span class="t" style="left:1107.30px;top:698.00px;font-size:12px;line-height:18px;color:#424242;transform:scaleX(0.9141);transform-origin:0 50%;">1-50 of 171</span>
<svg class="a" style="left:1186px;top:700px;" width="18" height="16" viewBox="0 0 18 16"><path d="M1.6 0.4 H5 V15.6 H1.6 Z M15.6 0.4 V15.6 L6 8 Z" fill="#bdd0f0"/></svg>
<svg class="a" style="left:1224px;top:700px;" width="14" height="16" viewBox="0 0 14 16"><path d="M11 1 L3.6 8 L11 15" fill="none" stroke="#bdd0f0" stroke-width="2.7"/></svg>
<svg class="a" style="left:1260px;top:700px;" width="14" height="16" viewBox="0 0 14 16"><path d="M3 1 L10.4 8 L3 15" fill="none" stroke="#5a8ddd" stroke-width="2.7"/></svg>
<svg class="a" style="left:1294px;top:700px;" width="18" height="16" viewBox="0 0 18 16"><path d="M13 0.4 H16.4 V15.6 H13 Z M2.4 0.4 V15.6 L12 8 Z" fill="#5a8ddd"/></svg>
<!-- windows taskbar -->
<div class="a" style="left:0px;top:728px;width:1366px;height:40px;background:#3a3a3a;"></div>
<svg class="a" style="left:16px;top:740px;" width="16" height="16" viewBox="0 0 16 16"><path d="M0 2.3 L6.6 1.4 V7.6 H0 Z M7.4 1.3 L16 0 V7.6 H7.4 Z M0 8.4 H6.6 V14.6 L0 13.7 Z M7.4 8.4 H16 V16 L7.4 14.7 Z" fill="#fff"/></svg>
<div class="a" style="left:48px;top:728px;width:288px;height:40px;background:#f2f2f2;border-top:1px solid #c9c9c9;border-bottom:1px solid #c9c9c9;"></div>
<svg class="a" style="left:59px;top:739px;" width="18" height="18" viewBox="0 0 18 18"><circle cx="10.8" cy="7" r="5.4" fill="none" stroke="#222" stroke-width="1.3"/><path d="M6.9 10.9 L1 16.8" stroke="#222" stroke-width="1.4"/></svg>
<span class="t" style="left:88.40px;top:738.00px;font-size:15px;line-height:21px;color:#3a3a3a;transform:scaleX(0.9579);transform-origin:0 50%;">Type here to search</span>
<svg class="a" style="left:258px;top:730px;" width="48" height="36" viewBox="0 0 48 36"><defs><linearGradient id="tkb" x1="0" y1="0" x2="1" y2="0"><stop offset="0" stop-color="#f1ebdd"/><stop offset="0.6" stop-color="#e9e6e2"/><stop offset="1" stop-color="#cdd2ea"/></linearGradient><linearGradient id="tkt" x1="0" y1="0" x2="1" y2="0"><stop offset="0" stop-color="#19a39a"/><stop offset="1" stop-color="#1d7fb4"/></linearGradient></defs><g transform="translate(10.4,3.4) rotate(21)"><rect x="0" y="0" width="36.3" height="15" rx="1.6" fill="url(#tkb)"/><rect x="0" y="0" width="36.3" height="2.7" rx="1.2" fill="url(#tkt)"/><rect x="0" y="12.5" width="36.3" height="2.5" rx="1.2" fill="url(#tkt)"/><path d="M2.2 4.4 V11 M4 4.4 V11 M5.6 4.4 V11" stroke="#5b4d8c" stroke-width="0.9"/><path d="M9 5 H20" stroke="#5b4d8c" stroke-width="1.1"/></g><g transform="translate(7.3,11.5) rotate(9.5) scale(1,1.07)"><rect x="0" y="0" width="36.3" height="15" rx="1.6" fill="url(#tkb)"/><rect x="0" y="0" width="36.3" height="2.7" rx="1.2" fill="url(#tkt)"/><rect x="0" y="12.5" width="36.3" height="2.5" rx="1.2" fill="url(#tkt)"/><path d="M2.2 4.4 V11 M4 4.4 V11 M5.6 4.4 V11" stroke="#5b4d8c" stroke-width="0.9"/><path d="M9.6 5 H24 M9.6 6.8 H23 M9 9 H14 M9 10.8 H13" stroke="#5b4d8c" stroke-width="1.1"/><rect x="16.6" y="8.2" width="7.4" height="3.6" fill="#fff"/><path d="M27 10.6 L33.4 5.2 M28.4 5.6 L31.6 10.2 M31.4 11.6 L34 9.6" stroke="#58a5c9" stroke-width="1.7" stroke-linecap="round"/></g></svg>
<svg class="a" style="left:304px;top:729px;" width="24" height="38" viewBox="0 0 24 38"><defs><linearGradient id="lg" x1="0" y1="0" x2="0" y2="1"><stop offset="0" stop-color="#a6f0ea"/><stop offset="0.12" stop-color="#84ded7"/><stop offset="1" stop-color="#5fc9c1"/></linearGradient></defs><path d="M7.6 8 V3 Q7.6 1.6 9 1.6 H14.2 Q15.6 1.6 15.6 3 V8" fill="none" stroke="#8a93a6" stroke-width="0.9"/><rect x="8.4" y="0.9" width="6.4" height="1.7" rx="0.8" fill="#2d3a7c"/><rect x="3" y="34" width="4.4" height="2.8" rx="1.3" fill="#4a3f78"/><rect x="14.8" y="34" width="4.4" height="2.8" rx="1.3" fill="#4a3f78"/><rect x="1" y="6.9" width="20.4" height="28" rx="2.6" fill="url(#lg)"/><path d="M5.4 10.4 V31 M9.4 14 V32 M13 14 V32 M17 10.4 V31" stroke="#4db3ac" stroke-width="1.1"/><rect x="8" y="9.6" width="6.4" height="3.6" rx="1.2" fill="#a3d6d2"/></svg>
<svg class="a" style="left:350px;top:739px;" width="19" height="17" viewBox="0 0 19 17"><g fill="none" stroke="#fff" stroke-width="1.5"><rect x="3.25" y="4.25" width="10" height="8.5"/><path d="M1 1.25 H13.6 M1 15.75 H13.6"/><path d="M16.65 4 V9.4" stroke-width="1.7"/></g><rect x="15.7" y="11" width="1.9" height="1.9" fill="#fff"/><rect x="15.7" y="1" width="1.9" height="1.6" fill="#fff"/></svg>
<svg class="a" style="left:399px;top:736px;" width="24" height="24" viewBox="0 0 24 24"><defs><linearGradient id="cp1" x1="0" y1="0" x2="0" y2="1"><stop offset="0" stop-color="#2a8cf2"/><stop offset="0.3" stop-color="#2fb5c9"/><stop offset="0.6" stop-color="#7ed35a"/><stop offset="1" stop-color="#f7d026"/></linearGradient><linearGradient id="cp2" x1="0" y1="0" x2="0" y2="1"><stop offset="0" stop-color="#a35cf2"/><stop offset="0.45" stop-color="#e85cb4"/><stop offset="1" stop-color="#f78b3a"/></linearGradient></defs><path d="M10 1.4 H15 Q17.6 1.4 18.4 4 L20 9 H14.6 L13.2 4.8 Q12.8 3.6 11.4 3.6 H7 Q8 1.4 10 1.4 Z" fill="#1f6fe0"/><path d="M14 22.6 H9 Q6.4 22.6 5.6 20 L4 15 H9.4 L10.8 19.2 Q11.2 20.4 12.6 20.4 H17 Q16 22.6 14 22.6 Z" fill="#ea532c"/><path d="M7.6 2.6 H11.4 Q13.6 2.6 12.9 4.9 L9.8 15.4 Q9 18 6.4 18 H3.2 Q0.4 18 1.2 15.2 L3.8 6 Q4.8 2.6 7.6 2.6 Z" fill="url(#cp1)"/><path d="M16.4 21.4 H12.6 Q10.4 21.4 11.1 19.1 L14.2 8.6 Q15 6 17.6 6 H20.8 Q23.6 6 22.8 8.8 L20.2 18 Q19.2 21.4 16.4 21.4 Z" fill="url(#cp2)"/></svg>
<svg class="a" style="left:448px;top:738px;" width="24" height="20" viewBox="0 0 24 20"><path d="M1.2 2.4 Q1.2 1 2.6 1 H9 Q9.8 1 10.4 1.6 L11.6 3 H1.2 Z" fill="#e6a100"/><path d="M1.2 3 H21.2 Q22.6 3 22.6 4.4 V17.6 Q22.6 19 21.2 19 H2.6 Q1.2 19 1.2 17.6 Z" fill="#fdd55c"/><path d="M1.2 14 H22.6 V17.6 Q22.6 19 21.2 19 H2.6 Q1.2 19 1.2 17.6 Z" fill="#f6c648"/><path d="M5.2 19 V12.4 Q5.2 11 6.6 11 H17.4 Q18.8 11 18.8 12.4 V19 H15 V14.6 H9 V19 Z" fill="#3f96e8"/></svg>
<svg class="a" style="left:496px;top:736px;" width="26" height="24" viewBox="0 0 26 24"><path d="M6 7.4 L15.2 1 L25.2 7 V13 H6 Z" fill="#2d9bf0"/><path d="M15.2 1 L25.2 7 V14 L13 7.6 Z" fill="#1460bd"/><path d="M15.2 1.4 L24 6.8 L19 10 L13 6.2 Z" fill="#1f83e0"/><path d="M6 12 L15 8 L25.2 13.4 V21 Q25.2 23.2 23 23.2 H8.2 Q6 23.2 6 21 Z" fill="#3ac4f7"/><path d="M6 16 L18 23.2 H8.2 Q6 23.2 6 21 Z" fill="#21a3ea"/><rect x="1" y="5.2" width="14.6" height="14.6" rx="1.6" fill="#156ccb"/><ellipse cx="8.3" cy="12.5" rx="3.3" ry="3.7" fill="none" stroke="#fff" stroke-width="1.7"/></svg>
<div class="a" style="left:534px;top:728px;width:44px;height:40px;background:#5b5b5b;"></div>
<div class="a" style="left:534px;top:766px;width:44px;height:2px;background:#76b9ed;"></div>
<svg class="a" style="left:546px;top:736px;" width="24" height="24" viewBox="0 0 24 24"><circle cx="12" cy="12" r="11.6" fill="#fff"/><path d="M12 12 L1.95 6.2 A11.6 11.6 0 0 1 22.05 6.2 Z" fill="#e33b2e"/><path d="M12 12 L22.05 6.2 A11.6 11.6 0 0 1 12 23.6 Z" fill="#f9bb13"/><path d="M12 12 L12 23.6 A11.6 11.6 0 0 1 1.95 6.2 Z" fill="#2a9f48"/><path d="M12 6.2 H22.05 A11.6 11.6 0 0 0 1.95 6.2 L6.98 14.9 Z" fill="#e33b2e"/><path d="M17.02 14.9 L22.05 6.2 A11.6 11.6 0 0 1 12 23.6 L12 17.8 Z" fill="#f9bb13"/><path d="M6.98 14.9 L12 23.6 A11.6 11.6 0 0 1 1.95 6.2 Z" fill="#2a9f48"/><circle cx="12" cy="12" r="5.6" fill="#fff"/><circle cx="12" cy="12" r="4.5" fill="#3f83ee"/></svg>
<div class="a" style="left:578px;top:728px;width:1px;height:40px;background:#343434;"></div>
<div class="a" style="left:579px;top:728px;width:3px;height:40px;background:#4e4e4e;"></div>
<div class="a" style="left:587px;top:766px;width:40px;height:2px;background:#76b9ed;"></div>
<div class="a" style="left:594.5px;top:736px;width:25px;height:24px;background:#fff;"></div>
<svg class="a" style="left:597px;top:738px;" width="20" height="21" viewBox="0 0 20 21"><path d="M4.6 12.6 H4.2 A3.2 3.2 0 0 1 4 6.3 A4.8 4.8 0 0 1 13.2 5.2 A3.7 3.7 0 0 1 14.4 12.4" fill="none" stroke="#2f9fee" stroke-width="1.3"/><path d="M7.2 9 V14" stroke="#e91e63" stroke-width="1"/><circle cx="7.2" cy="9" r="1.2" fill="#e91e63"/><circle cx="7.2" cy="14" r="1.2" fill="#e91e63"/><path d="M12 7.4 V17 M10.6 10.6 H13.4 M10.6 13.6 H13.4" stroke="#6a1b9a" stroke-width="1"/><circle cx="12" cy="7.4" r="1.1" fill="#6a1b9a"/><circle cx="12" cy="17.4" r="1.3" fill="#6a1b9a"/></svg>
<svg class="a" style="left:910px;top:734px;" width="30" height="27" viewBox="0 0 30 27"><defs><linearGradient id="cl" x1="0" y1="0" x2="0" y2="1"><stop offset="0" stop-color="#b5d0fa"/><stop offset="1" stop-color="#7ba6ee"/></linearGradient></defs><path d="M9.6 2 A6.6 6.6 0 1 0 15 12.6 A5.4 5.4 0 0 1 9.6 2 Z" fill="#f0a030"/><path d="M6.4 24.6 A4.6 4.6 0 0 1 6 15.6 A6.2 6.2 0 0 1 17.6 13.6 A5.6 5.6 0 0 1 21.4 24.6 Z" fill="url(#cl)"/><circle cx="20" cy="7.8" r="5.9" fill="#d42a2a"/></svg>
<span class="t" style="left:927.49px;top:735.20px;font-size:9px;line-height:14px;color:#fff;font-weight:700;">4</span>
<span class="t" style="left:944.40px;top:738.00px;font-size:14.5px;line-height:20px;color:#fff;transform:scaleX(0.8702);transform-origin:0 50%;">24°C</span>
<span class="t" style="left:982.40px;top:738.00px;font-size:14.5px;line-height:20px;color:#fff;transform:scaleX(0.9790);transform-origin:0 50%;">Mostly cloudy</span>
<svg class="a" style="left:1092px;top:743px;" width="15" height="10" viewBox="0 0 15 10"><path d="M1.4 8.6 L7.4 2.4 L13.4 8.6" fill="none" stroke="#fff" stroke-width="1.4"/></svg>
<svg class="a" style="left:1117px;top:742px;" width="15" height="14" viewBox="0 0 15 14"><g fill="none" stroke-width="1.3"><path d="M1.2 12.8 A11.6 11.6 0 0 1 12.8 1.2" stroke="#8a8a8a"/><path d="M4.6 12.8 A8.2 8.2 0 0 1 12.8 4.6" stroke="#a8a8a8"/><path d="M8 12.8 A4.8 4.8 0 0 1 12.8 8" stroke="#fff"/></g><circle cx="12" cy="12" r="1.5" fill="#fff"/></svg>
<svg class="a" style="left:1141px;top:739px;" width="14" height="18" viewBox="0 0 14 18"><g fill="none" stroke="#fff" stroke-width="1.2"><rect x="2" y="5.4" width="7" height="7" rx="1.4"/><path d="M9 8 L11.8 6.2 V11.6 L9 9.8"/><path d="M2 3.8 Q2.4 1 5 1 H8 Q10.6 1 11 3.8 M2 14 Q2.4 16.8 5 16.8 H8 Q10.6 16.8 11 14" stroke="#d0d0d0"/></g></svg>
<svg class="a" style="left:1162px;top:741px;" width="19" height="13" viewBox="0 0 19 13"><rect x="5.6" y="3.6" width="10.8" height="8" fill="none" stroke="#fff" stroke-width="1.1"/><path d="M7 5 H15 V10.2 H7 Z" fill="#fff"/><rect x="16.9" y="5.8" width="1.1" height="3.6" fill="#fff"/><path d="M1.9 1 V3.6 M4.1 1 V3.6" stroke="#fff" stroke-width="1"/><path d="M0.9 3.5 H5.1 V5.2 Q5.1 7.3 3 7.3 Q0.9 7.3 0.9 5.2 Z" fill="#fff"/><path d="M3 7 V11 H5.4" fill="none" stroke="#fff" stroke-width="1"/></svg>
<svg class="a" style="left:1186px;top:742px;" width="17" height="13" viewBox="0 0 17 13"><path d="M1 4.4 H3.6 L7 1.2 V11.8 L3.6 8.6 H1 Z" fill="none" stroke="#fff" stroke-width="1.1" stroke-linejoin="round"/><path d="M10 4 L15 9 M15 4 L10 9" stroke="#fff" stroke-width="1.1"/></svg>
<span class="t" style="left:1213.40px;top:739.00px;font-size:12px;line-height:18px;color:#fff;transform:scaleX(0.8610);transform-origin:0 50%;">ENG</span>
<span class="t" style="left:1263.80px;top:729.70px;font-size:12px;line-height:18px;color:#fff;transform:scaleX(0.8991);transform-origin:0 50%;">21:46</span>
<span class="t" style="left:1248.80px;top:748.00px;font-size:12px;line-height:18px;color:#fff;transform:scaleX(0.9513);transform-origin:0 50%;">21-07-2025</span>
<svg class="a" style="left:1325px;top:740px;" width="17" height="14" viewBox="0 0 17 14"><path d="M0 0 H16.6 V11.4 H4 L0 14 Z" fill="#fff"/><path d="M2.6 3 H14 M2.6 5.6 H14 M2.6 8.2 H14" stroke="#3a3a3a" stroke-width="1"/></svg>
<div class="a" style="left:1331.3px;top:745.8px;width:18.8px;height:18.8px;border-radius:50%;background:#3a3a3a;border:1px solid #bdbdbd"></div>
<span class="t" style="left:1334.95px;top:747.20px;font-size:11px;line-height:16px;color:#fff;transform:scaleX(0.9388);transform-origin:0 50%;">21</span>
<div class="a" style="left:1360px;top:728px;width:1px;height:40px;background:#6a6a6a;"></div>
</div>
</body>
</html>
